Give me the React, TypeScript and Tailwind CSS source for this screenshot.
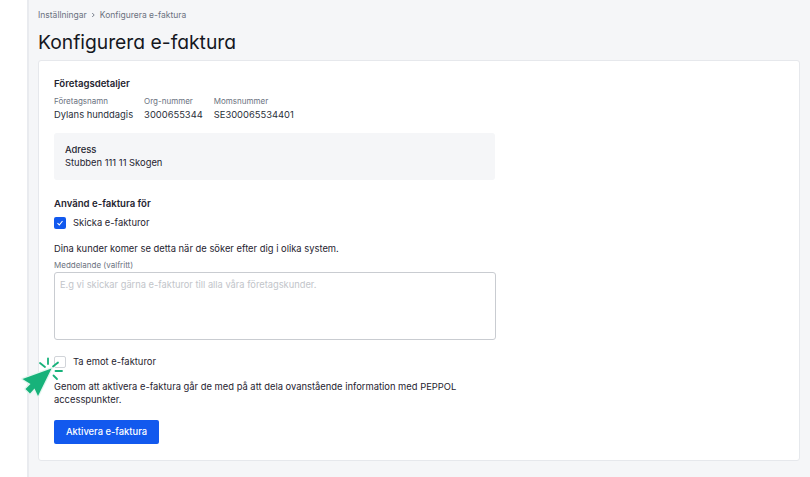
import React from "react";

function Cursor() {
  return (
    <svg className="absolute left-[18px] top-[354px]" width="50" height="46" viewBox="0 0 50 46" fill="none">
      <path d="M4.5 25 L33.5 14.5 L20 42 L16.5 34.5 L12 39.5 L7.5 35 L12.5 30 Z" fill="#17b27a" stroke="#e3f6ee" strokeWidth="2.5" strokeLinejoin="round" paintOrder="stroke" />
      <g stroke="#17b27a" strokeWidth="1.8" strokeLinecap="round">
        <path d="M30 4.5 V10" />
        <path d="M22 9 L27 13" />
        <path d="M40 8.5 L35 12.5" />
        <path d="M37.5 17 H44" />
        <path d="M35.5 21.5 L39 25" />
      </g>
    </svg>
  );
}

export default function App() {
  return (
    <div className="relative flex h-[477px] w-[810px] overflow-hidden bg-white font-['Inter','Liberation_Sans',sans-serif] text-[#1f2430]">
      <div className="w-[27px] shrink-0 bg-white" />
      <main className="flex-1 border-l-2 border-[#e9ebef] bg-[#f5f6f8] pl-[9px] pr-[10px]">
        <nav className="flex h-[30px] items-center gap-[4px] text-[8.5px] leading-none text-[#6b7280]">
          <span>Inställningar</span>
          <svg width="5" height="6" viewBox="0 0 5 6" fill="none"><path d="M1.2 1l2 2-2 2" stroke="#6b7280" strokeWidth="0.9" /></svg>
          <span>Konfigurera e-faktura</span>
        </nav>
        <h1 className="h-[30px] text-[19.3px] font-normal leading-[24px] text-[#15181f] [font-feature-settings:'cv11','ss03']">Konfigurera e-faktura</h1>
        <section className="h-[401px] w-[762px] rounded-[3px] border border-[#e6e8ec] bg-white pl-[15px] pt-[16px]">
          <h2 className="text-[9.6px] font-semibold leading-[13px]">Företagsdetaljer</h2>
          <dl className="mt-[6px] flex gap-[11px]">
            {[
              ["Företagsnamn", "Dylans hunddagis"],
              ["Org-nummer", "3000655344"],
              ["Momsnummer", "SE300065534401"],
            ].map(([k, v]) => (
              <div key={k}>
                <dt className="text-[8px] leading-[11px] text-[#6b7280]">{k}</dt>
                <dd className="mt-[1px] text-[9.4px] leading-[13px] text-[#2a2f3a]">{v}</dd>
              </div>
            ))}
          </dl>
          <div className="mt-[12px] h-[47px] w-[441px] rounded-[3px] bg-[#f5f6f8] pl-[11px] pt-[10px] text-[9.4px] leading-[13px]">
            <div className="font-medium">Adress</div>
            <div>Stubben 111 11 Skogen</div>
          </div>
          <h2 className="mt-[17px] text-[9.6px] font-semibold leading-[13px]">Använd e-faktura för</h2>
          <label className="mt-[7px] flex h-[12px] items-center gap-[7px] text-[9.4px]">
            <span className="flex h-[12px] w-[12px] items-center justify-center rounded-[2px] bg-[#1259ee]">
              <svg width="8" height="8" viewBox="0 0 8 8" fill="none"><path d="M1.5 4.2l1.8 1.8 3.2-4" stroke="#fff" strokeWidth="1.1" /></svg>
            </span>
            Skicka e-fakturor
          </label>
          <p className="mt-[13px] text-[9.4px] leading-[13px]">Dina kunder komer se detta när de söker efter dig i olika system.</p>
          <label className="mt-[5px] block text-[8px] leading-[11px] text-[#6b7280]">Meddelande (valfritt)</label>
          <div className="mt-[1px] h-[68px] w-[442px] rounded-[3px] border border-[#c9ccd1] bg-white pl-[5px] pt-[5px] text-[9.3px] leading-[13px] text-[#c2c5ca]">
            E.g vi skickar gärna e-fakturor till alla våra företagskunder.
          </div>
          <label className="mt-[16px] flex h-[12px] items-center gap-[7px] text-[9.4px]">
            <span className="h-[12px] w-[12px] rounded-[2px] border border-[#d1d4d9] bg-white" />
            Ta emot e-fakturor
          </label>
          <p className="mt-[12px] w-[440px] text-[9.4px] leading-[13px]">Genom att aktivera e-faktura går de med på att dela ovanstående information med PEPPOL accesspunkter.</p>
          <button className="mt-[14px] flex h-[24px] w-[105px] items-center justify-center rounded-[2px] bg-[#1259ee] text-[9.4px] font-medium text-white">Aktivera e-faktura</button>
        </section>
      </main>
      <Cursor />
    </div>
  );
}
